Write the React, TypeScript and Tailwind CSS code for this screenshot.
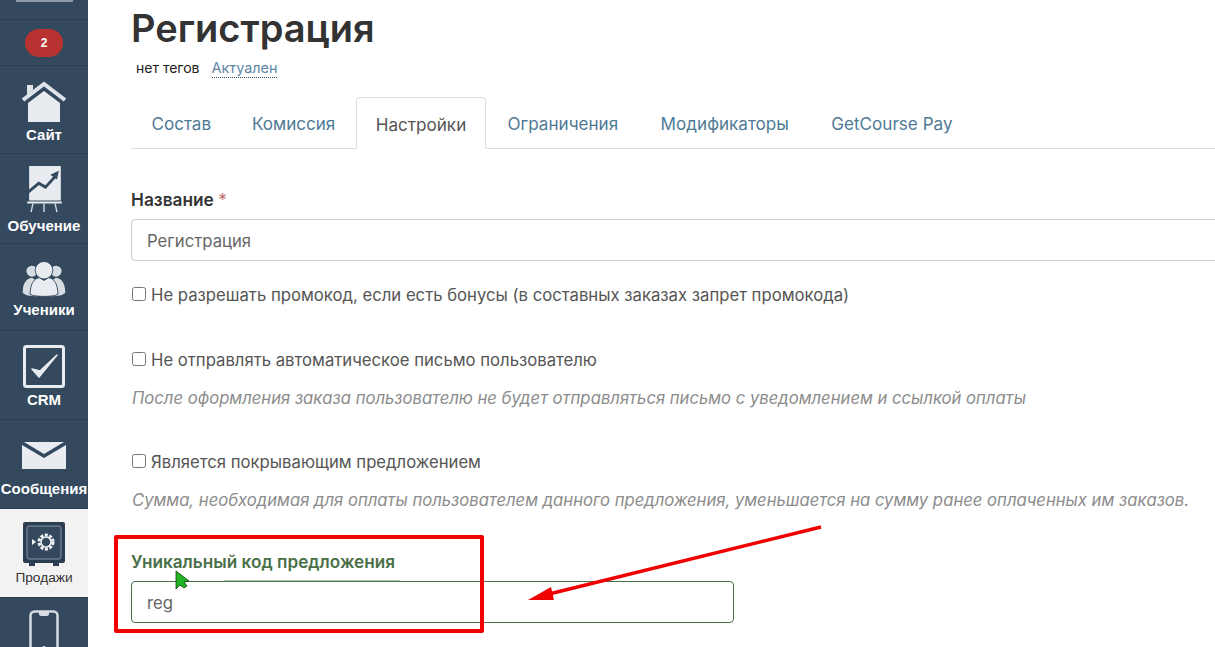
const font = { fontFamily: '"Inter", "Noto Sans", sans-serif' };

function HomeIcon() {
  return (
    <svg width="46" height="42" viewBox="0 0 46 42">
      <path d="M6 4h6v5l-6 5z" fill="#dfe4ea" />
      <path d="M2 19L23 3l21 16" fill="none" stroke="#dfe4ea" strokeWidth="4" />
      <path d="M7 22L23 10l16 12v19H7z" fill="#e8ecf0" />
    </svg>
  );
}

function BoardIcon() {
  return (
    <svg width="35" height="48" viewBox="0 0 36 50">
      <path d="M2 0h33v36H2z" fill="#e8ecf0" />
      <path d="M0 28l12-10 7 4 11-12" fill="none" stroke="#34495e" strokeWidth="3" />
      <path d="M24 9l9-4-2 9z" fill="#34495e" />
      <path d="M0 37h36v2H0z" fill="#e8ecf0" />
      <path d="M6 39L4 48M17.500 39v9M29 39l2 9" stroke="#cfd6dc" strokeWidth="1.500" />
    </svg>
  );
}

function UsersIcon() {
  return (
    <svg width="44" height="37" viewBox="0 0 46 40">
      <circle cx="10" cy="11" r="6" fill="#d6dce2" />
      <circle cx="36" cy="11" r="6" fill="#d6dce2" />
      <path d="M0 34c0-9 3-15 10-16l6 4v16C8 38 2 37 0 34zM46 34c0-9-3-15-10-16l-6 4v16c8 0 14-1 16-4z" fill="#d6dce2" />
      <circle cx="23" cy="10" r="9.500" fill="#e8ecf0" stroke="#34495e" />
      <path d="M8 36c0-11 4-17 10-18l5 3 5-3c6 1 10 7 10 18-4 3-26 3-30 0z" fill="#e8ecf0" stroke="#34495e" />
    </svg>
  );
}

function CrmIcon() {
  return (
    <svg width="42" height="43" viewBox="0 0 42 43">
      <rect x="1.500" y="1.500" width="39" height="40" rx="2" fill="none" stroke="#e8ecf0" strokeWidth="3" />
      <path d="M9 24l7 8L34 10l-17 16z" fill="#e8ecf0" stroke="#e8ecf0" strokeWidth="1.500" strokeLinejoin="round" />
    </svg>
  );
}

function MailIcon() {
  return (
    <svg width="44" height="27" viewBox="0 0 44 27" className="mb-[8px]">
      <path d="M0 3v24h44V3L22 16z" fill="#e8ecf0" />
      <path d="M2 0h40L22 12z" fill="#e8ecf0" />
    </svg>
  );
}

function SafeIcon() {
  return (
    <svg width="42" height="44" viewBox="0 0 42 44">
      <path d="M2 0h38a2 2 0 012 2v37a2 2 0 01-2 2h-4v3h-6v-3H12v3H6v-3H2a2 2 0 01-2-2V2a2 2 0 012-2z" fill="#2c3e50" />
      <rect x="4" y="4" width="34" height="33" rx="2" fill="#34495e" stroke="#8595a5" />
      <circle cx="23" cy="20" r="7" fill="none" stroke="#f2f4f6" strokeWidth="3" strokeDasharray="3 1.500" />
      <circle cx="23" cy="20" r="5" fill="none" stroke="#f2f4f6" strokeWidth="1.500" />
      <path d="M9 17l4 3-4 3z" fill="#f2f4f6" />
    </svg>
  );
}

function PhoneIcon() {
  return (
    <svg width="30" height="50" viewBox="0 0 30 50">
      <rect x="1.500" y="1.500" width="27" height="60" rx="4" fill="none" stroke="#d6dce2" strokeWidth="2.500" />
      <path d="M10 2h10v2a2 2 0 01-2 2h-6a2 2 0 01-2-2z" fill="#d6dce2" />
      <circle cx="15" cy="38" r="2" fill="#d6dce2" />
    </svg>
  );
}

type NavProps = { label: string; icon: React.ReactNode; className: string; active?: boolean };

function NavItem({ label, icon, className, active }: NavProps) {
  return (
    <div
      className={`${className} flex flex-col items-center justify-end border-b border-[#2c3e50] ${
        active ? 'bg-[#f2f2f2] text-[#333]' : 'text-white'
      }`}
    >
      {icon}
      <span
        className={`mt-[3px] leading-[17px] whitespace-nowrap ${active ? 'font-normal text-[13.700px]' : 'font-bold text-[15px]'}`}
        style={{ fontFamily: '"Liberation Sans", sans-serif' }}
      >
        {label}
      </span>
    </div>
  );
}

function Sidebar() {
  return (
    <aside className="w-[88px] shrink-0 h-full bg-[#34495e] overflow-hidden">
      <div className="h-[20px] border-b border-[#2c3e50] flex justify-center">
        <div className="w-[57px] h-[2px] bg-[#8e99a5]" />
      </div>
      <div className="h-[46px] border-b border-[#2c3e50] flex items-center justify-center">
        <span
          className="w-[38px] h-[28px] rounded-[14px] bg-[#b83232] text-white text-[12px] font-bold flex items-center justify-center"
          style={{ fontFamily: '"Liberation Sans", sans-serif' }}
        >
          2
        </span>
      </div>
      <NavItem className="h-[88px] pb-[10px]" label="Сайт" icon={<HomeIcon />} />
      <NavItem className="h-[90px] pb-[9px]" label="Обучение" icon={<BoardIcon />} />
      <NavItem className="h-[87px] pb-[12px]" label="Ученики" icon={<UsersIcon />} />
      <NavItem className="h-[89px] pb-[11px]" label="CRM" icon={<CrmIcon />} />
      <NavItem className="h-[89px] pb-[11px]" label="Сообщения" icon={<MailIcon />} />
      <NavItem className="h-[89px] pb-[11px]" label="Продажи" icon={<SafeIcon />} active />
      <div className="flex justify-center pt-[12px]">
        <PhoneIcon />
      </div>
    </aside>
  );
}

function Tabs() {
  return (
    <div className="mt-[19px] flex h-[52px] border-b border-[#dddddd] text-[17.100px] text-[#4f7a96]">
      <div className="px-[20.400px] pt-[3px] flex items-center">Состав</div>
      <div className="px-[20.400px] pt-[3px] flex items-center">Комиссия</div>
      <div className="h-[52px] px-[19px] pt-[3px] flex items-center rounded-t-[4px] border border-[#dddddd] border-b-white bg-white text-[#555555]">
        Настройки
      </div>
      <div className="px-[21.200px] pt-[3px] flex items-center">Ограничения</div>
      <div className="px-[21.200px] pt-[3px] flex items-center">Модификаторы</div>
      <div className="px-[21.200px] pt-[3px] flex items-center">GetCourse Pay</div>
    </div>
  );
}

function Check({ label }: { label: string }) {
  return (
    <label className="flex items-center text-[16.700px] leading-[20px] text-[#555555] whitespace-nowrap">
      <input type="checkbox" className="w-[14px] h-[14px] ml-[1px] mr-[5px] mb-[3px] appearance-auto" />
      {label}
    </label>
  );
}

function Hint({ children }: { children: string }) {
  return <p className="mt-[18px] pl-px text-[16.650px] leading-[20px] italic text-[#8c8c8c] whitespace-nowrap">{children}</p>;
}

export default function App() {
  return (
    <div className="relative flex h-[647px] w-[1215px] overflow-hidden bg-white" style={font}>
      <Sidebar />
      <main className="min-w-0 flex-1 pl-[43px]">
        <div className="w-[1300px]">
          <h1 className="pt-[6px] text-[38px] leading-[44px] font-semibold text-[#333333]">Регистрация</h1>
          <div className="mt-[9px] flex items-baseline pl-[5px] leading-[18px]">
            <span className="text-[14px] text-[#222]">нет тегов</span>
            <span className="ml-[12px] text-[14.400px] text-[#5f86a3] border-b border-dotted border-[#34495e]">Актуален</span>
          </div>
          <Tabs />
          <div className="mt-[40px] text-[17.300px] leading-[22px] font-semibold text-[#333333]">
            Название <span className="font-normal text-[#c0706a]">*</span>
          </div>
          <div className="mt-[8px] h-[42px] rounded-[4px] border border-[#cccccc] flex items-center px-[15px] pt-[3px] text-[16.700px] text-[#666666]">
            Регистрация
          </div>
          <div className="mt-[24px]">
            <Check label="Не разрешать промокод, если есть бонусы (в составных заказах запрет промокода)" />
          </div>
          <div className="mt-[45px]">
            <Check label="Не отправлять автоматическое письмо пользователю" />
            <Hint>После оформления заказа пользователю не будет отправляться письмо с уведомлением и ссылкой оплаты</Hint>
          </div>
          <div className="mt-[44px]">
            <Check label="Является покрывающим предложением" />
            <Hint>Сумма, необходимая для оплаты пользователем данного предложения, уменьшается на сумму ранее оплаченных им заказов.</Hint>
          </div>
          <div className="mt-[41px] text-[17.200px] leading-[22px] font-semibold text-[#4a7048]">Уникальный код предложения</div>
          <div className="mt-[8px] h-[42px] w-[603px] rounded-[4px] border border-[#4a7048] flex items-center px-[15px] pt-[3px] text-[16.700px] text-[#666666]">
            reg
          </div>
        </div>
      </main>

      {/* annotation overlay */}
      <div className="absolute left-[114px] top-[535px] w-[370px] h-[98px] rounded-[2px] border-[4px] border-[#f00000]" />
      <div className="absolute left-[224px] top-[580px] w-[176px] h-px bg-[#b9c4b8]" />
      <svg className="absolute left-0 top-0 pointer-events-none" width="1215" height="647">
        <path d="M821 527L545 595" stroke="#f00000" strokeWidth="3.500" fill="none" />
        <path d="M528 600l23-13 3 13z" fill="#f00000" />
        <path d="M176 571l0 18 4-4 4 3 3-2-3-4 5-1z" fill="#22b322" stroke="#0b3d0b" strokeWidth="0.800" />
      </svg>
    </div>
  );
}
